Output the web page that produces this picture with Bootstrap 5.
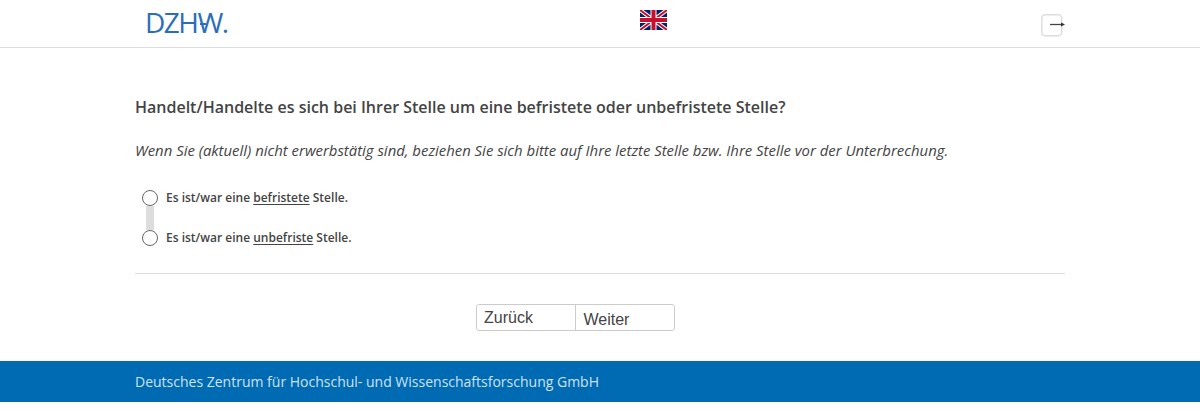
<!DOCTYPE html>
<html lang="de">
<head>
    <meta charset="UTF-8">
    <meta name="viewport" content="width=device-width, initial-scale=1.0">
    <title>DZHW Umfrage</title>
    <link href="https://cdn.jsdelivr.net/npm/bootstrap@5.3.0/dist/css/bootstrap.min.css" rel="stylesheet">
    <style>
        body { font-family: "Open Sans", sans-serif; color: #444; background: #fff; }
        .page-head { height: 48px; border-bottom: 1px solid #ddd; }
        .head-wrap { width: 930px; margin: 0 auto; height: 47px; }
        .logo-box { width: 130px; padding-left: 10px; }
        .logo-text { font-family: "Open Sans", sans-serif; font-weight: 400; font-size: 28px; letter-spacing: -1.5px; color: #2a6ebb; line-height: 1; position: relative; top: -2px; }
        .logo-bar { position: absolute; left: 55px; top: 15px; width: 6px; height: 2px; background: #2a6ebb; }
        .flag-box { padding-top: 10px; }
        .flag-box svg { display: block; }
        .exit-box { width: 24px; padding-top: 14px; }
        .exit-box svg { display: block; }
        .main-wrap { width: 930px; margin: 0 auto; height: 313px; padding-top: 48px; }
        .ask-title { font-size: 16px; font-weight: 600; line-height: 22px; margin: 0 0 21px; color: #444; }
        .ask-hint { font-size: 14.9px; font-style: italic; line-height: 22px; margin: 0 0 27px; color: #444; }
        .choice-list { padding-left: 7px; }
        .choice-row { height: 20px; font-size: 12px; font-weight: 600; color: #444; gap: 8px; position: relative; z-index: 1; }
        .choice-row u { text-underline-offset: 2px; }
        .choice-dot { width: 16px; height: 16px; border: 1px solid #666; border-radius: 50%; background: #fff; appearance: none; margin: 0; flex: none; }
        .choice-link { width: 8px; height: 24px; margin: -2px 0 -2px 4px; background: #ddd; }
        .rule-line { border-top: 1px solid #ddd; margin: 25px 0 30px; }
        .nav-btns { width: 199px; height: 27px; margin-left: 341px; border: 1px solid #ccc; border-radius: 3px; font-family: "Liberation Sans", sans-serif; font-size: 16px; color: #444; }
        .nav-btns button { height: 25px; padding: 0 0 0 7px; border: 0; background: #fff; color: #444; text-align: left; line-height: 25px; border-radius: 3px; font-size: 16px; }
        .nav-btns button:first-child { width: 98px; line-height: 25px; padding-bottom: 2px; }
        .nav-btns button + button { width: 100px; border-left: 1px solid #ccc; border-radius: 0 3px 3px 0; padding: 2px 0 0 8px; }
        .page-foot { height: 41px; background: #006ab2; color: #cfe3f2; font-size: 14px; }
        .foot-wrap { width: 930px; margin: 0 auto; line-height: 41px; }
    </style>
</head>
<body>
    <!-- Header -->
    <div class="page-head">
        <div class="head-wrap d-flex justify-content-between">
            <div class="logo-box d-flex align-items-center"><span class="logo-text">DZHW.<span class="logo-bar"></span></span></div>
            <div class="flag-box">
                <svg width="27" height="20" viewBox="0 0 27 20">
                    <rect width="27" height="20" fill="#012169"/>
                    <path d="M0 0L27 20M27 0L0 20" stroke="#fff" stroke-width="4"/>
                    <path d="M0 0L27 20M27 0L0 20" stroke="#c8102e" stroke-width="2"/>
                    <path d="M13.5 0V20M0 10H27" stroke="#fff" stroke-width="6"/>
                    <path d="M13.5 0V20M0 10H27" stroke="#c8102e" stroke-width="4"/>
                </svg>
            </div>
            <div class="exit-box">
                <svg width="24" height="23" viewBox="0 0 24 23">
                    <rect x=".75" y=".75" width="20" height="21" rx="3.5" fill="#fff" stroke="#ddd" stroke-width="1.5"/>
                    <path d="M9 10.5H20" stroke="#444" stroke-width="1.3"/>
                    <path d="M20 8.5L24 10.5L20 12.5Z" fill="#333"/>
                </svg>
            </div>
        </div>
    </div>

    <!-- Question -->
    <div class="main-wrap">
        <h1 class="ask-title">Handelt/Handelte es sich bei Ihrer Stelle um eine befristete oder unbefristete Stelle?</h1>
        <p class="ask-hint">Wenn Sie (aktuell) nicht erwerbstätig sind, beziehen Sie sich bitte auf Ihre letzte Stelle bzw. Ihre Stelle vor der Unterbrechung.</p>
        <div class="choice-list">
            <label class="choice-row d-flex align-items-center">
                <input class="choice-dot" type="radio" name="stelle">
                <span>Es ist/war eine <u>befristete</u> Stelle.</span>
            </label>
            <div class="choice-link"></div>
            <label class="choice-row d-flex align-items-center">
                <input class="choice-dot" type="radio" name="stelle">
                <span>Es ist/war eine <u>unbefriste</u> Stelle.</span>
            </label>
        </div>
        <div class="rule-line"></div>
        <div class="nav-btns d-flex">
            <button type="button">Zurück</button>
            <button type="button">Weiter</button>
        </div>
    </div>

    <!-- Footer -->
    <div class="page-foot">
        <div class="foot-wrap">Deutsches Zentrum für Hochschul- und Wissenschaftsforschung GmbH</div>
    </div>
</body>
</html>
